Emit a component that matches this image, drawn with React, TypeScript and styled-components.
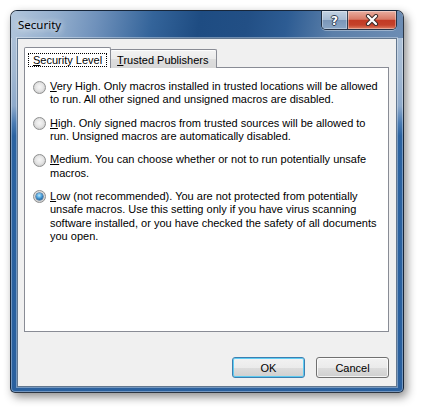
import React from "react";
import styled, { createGlobalStyle, css } from "styled-components";

const GlobalStyle = createGlobalStyle`
  html, body { margin: 0; padding: 0; background: #ffffff; }
  body { width: 422px; height: 412px; overflow: hidden; }
  * { box-sizing: border-box; }
`;

const Page = styled.div`
  width: 422px;
  height: 412px;
  padding: 10px 0 0 10px;
  background: #ffffff;
`;

const Window = styled.div`
  width: 394px;
  height: 383px;
  display: flex;
  flex-direction: column;
  border: 1px solid rgba(20, 28, 40, 0.85);
  border-radius: 7px 7px 5px 5px;
  overflow: hidden;
  background: linear-gradient(
    180deg,
    #b4c7dc 0px,
    #a3b9d2 60px,
    #8eaacb 95px,
    #4b7cb3 112px,
    #2b63a1 125px,
    #2a609e 100%
  );
  box-shadow: 3px 4px 10px rgba(0, 0, 0, 0.45),
    inset 0 0 0 1px rgba(255, 255, 255, 0.35);
`;

const TitleBar = styled.div`
  height: 27px;
  flex: none;
  display: flex;
  align-items: stretch;
  padding: 0 6px 0 7px;
  background: linear-gradient(
    100deg,
    #b2c6dc 0%,
    #93aecd 12%,
    #6f91bb 22%,
    #34649a 36%,
    #1e4c82 48%,
    #224f85 60%,
    #2d5c93 70%,
    #5b7fa9 82%,
    #6d8db4 100%
  );
`;

const Title = styled.div`
  display: flex;
  align-items: center;
  padding-bottom: 1px;
  font-family: "Noto Sans", "Liberation Sans", sans-serif;
  font-size: 11.5px;
  color: #000;
  text-shadow: 0 0 6px rgba(255, 255, 255, 0.9), 0 0 10px rgba(255, 255, 255, 0.6);
  flex: 1;
`;

const CaptionGroup = styled.div`
  align-self: flex-start;
  display: flex;
  height: 19px;
  border: 1px solid rgba(25, 35, 50, 0.85);
  border-top: none;
  border-radius: 0 0 5px 5px;
  overflow: hidden;
  box-shadow: 0 1px 0 rgba(255, 255, 255, 0.35);
`;

const CaptionButton = styled.div<{ $kind: "help" | "close" }>`
  height: 100%;
  display: flex;
  align-items: center;
  justify-content: center;
  box-shadow: inset 0 0 0 1px rgba(255, 255, 255, 0.35);
  ${(p) =>
    p.$kind === "help"
      ? css`
          width: 26px;
          border-right: 1px solid rgba(25, 35, 50, 0.8);
          background: linear-gradient(
            180deg,
            #c3d2e3 0%,
            #a6bbd3 48%,
            #7a96b9 52%,
            #8aa6c6 100%
          );
        `
      : css`
          width: 48px;
          background: linear-gradient(
            180deg,
            #e9aea0 0%,
            #d87a66 46%,
            #c23a24 52%,
            #c4412a 78%,
            #de7e62 100%
          );
        `}
`;

const HelpGlyph = styled.span`
  font-family: "DejaVu Sans", sans-serif;
  font-weight: bold;
  font-size: 12px;
  line-height: 12px;
  color: #ffffff;
  margin-top: 1px;
  text-shadow: 1px 0 0 #2c3c52, -1px 0 0 #2c3c52, 0 1px 0 #2c3c52,
    0 -1px 0 #2c3c52;
`;

const Frame = styled.div`
  flex: 1;
  display: flex;
  min-height: 0;
  padding: 0 6px 5px 6px;
`;

const Client = styled.div`
  flex: 1;
  min-width: 0;
  width: 380px;
  display: flex;
  flex-direction: column;
  background: #f0f0f0;
  border: 1px solid #62778f;
  box-shadow: 0 0 0 1px rgba(255, 255, 255, 0.35);
  padding: 8px 7px 8px 6px;
`;

const TabStrip = styled.div`
  display: flex;
  align-items: flex-end;
  height: 21px;
  margin-bottom: -1px;
  position: relative;
  z-index: 1;
  font-family: "Liberation Sans", Arial, sans-serif;
  font-size: 11px;
  color: #000;
`;

const Tab = styled.div<{ $active?: boolean }>`
  display: flex;
  border: 1px solid #898c95;
  border-bottom: none;
  border-radius: 2px 2px 0 0;
  ${(p) =>
    p.$active
      ? css`
          height: 21px;
          padding: 5px 3px 0 3px;
          background: #ffffff;
          position: relative;
          z-index: 2;
          margin-right: -1px;
        `
      : css`
          height: 19px;
          align-items: center;
          padding: 2px 8px 0 6px;
          background: linear-gradient(180deg, #f3f3f3 0%, #ebebeb 50%, #dedede 52%, #d8d8d8 100%);
          box-shadow: inset 0 1px 0 rgba(255, 255, 255, 0.8);
        `}
`;

const FocusLabel = styled.span`
  display: block;
  height: 14px;
  line-height: 12px;
  padding: 0 4px;
  border: 1px dotted #000;
`;

const Key = styled.span`
  text-decoration: underline;
  text-underline-offset: 1px;
`;

const Panel = styled.div`
  flex: 1;
  min-width: 0;
  background: #ffffff;
  border: 1px solid #898c95;
  padding: 12px 0 0 8px;
  display: flex;
  flex-direction: column;
  gap: 10px;
  font-family: "Liberation Sans", Arial, sans-serif;
  font-size: 11px;
  color: #000;
`;

const Option = styled.div`
  display: flex;
  align-items: flex-start;
  gap: 4px;
`;

const Radio = styled.span<{ $checked?: boolean }>`
  flex: none;
  width: 13px;
  height: 13px;
  margin-top: 0.5px;
  border-radius: 50%;
  border: 1px solid #8e8f8f;
  background: radial-gradient(
    circle at 50% 45%,
    #f6f6f6 0%,
    #e6e6e6 45%,
    #cfcfcf 75%,
    #f2f2f2 100%
  );
  display: flex;
  align-items: center;
  justify-content: center;
  &::after {
    content: "";
    display: ${(p) => (p.$checked ? "block" : "none")};
    width: 7px;
    height: 7px;
    border-radius: 50%;
    background: radial-gradient(
      circle at 45% 35%,
      #bfe8fb 0%,
      #5fb0e4 35%,
      #1f6cad 70%,
      #0d3f73 100%
    );
    box-shadow: 0 0 0 0.5px #1a4d7c;
  }
`;

const OptionText = styled.div`
  display: flex;
  flex-direction: column;
`;

const Line = styled.span`
  display: block;
  height: 13.33px;
  line-height: 13.33px;
  white-space: nowrap;
`;

const ButtonRow = styled.div`
  display: flex;
  justify-content: flex-end;
  gap: 11px;
  margin-top: 25px;
`;

const PushButton = styled.div<{ $default?: boolean }>`
  width: 73px;
  height: 21px;
  display: flex;
  align-items: center;
  justify-content: center;
  font-family: "Liberation Sans", Arial, sans-serif;
  font-size: 11px;
  color: #000;
  border-radius: 3px;
  border: 1px solid ${(p) => (p.$default ? "#3c7fb1" : "#707070")};
  background: linear-gradient(180deg, #f2f2f2 0%, #ebebeb 50%, #dddddd 51%, #cfcfcf 100%);
  box-shadow: inset 0 0 0 1px
    ${(p) => (p.$default ? "rgba(72, 200, 245, 0.85)" : "rgba(255, 255, 255, 0.75)")};
`;

type OptionData = { key: string; rest: string[]; checked?: boolean };

const options: OptionData[] = [
  {
    key: "V",
    rest: [
      "ery High. Only macros installed in trusted locations will be allowed",
      "to run. All other signed and unsigned macros are disabled.",
    ],
  },
  {
    key: "H",
    rest: [
      "igh. Only signed macros from trusted sources will be allowed to",
      "run. Unsigned macros are automatically disabled.",
    ],
  },
  {
    key: "M",
    rest: [
      "edium. You can choose whether or not to run potentially unsafe",
      "macros.",
    ],
  },
  {
    key: "L",
    checked: true,
    rest: [
      "ow (not recommended). You are not protected from potentially",
      "unsafe macros. Use this setting only if you have virus scanning",
      "software installed, or you have checked the safety of all documents",
      "you open.",
    ],
  },
];

const CloseIcon = () => (
  <svg width="14" height="12" viewBox="0 0 14 12">
    <path
      d="M3 2 L11 10 M11 2 L3 10"
      stroke="#3a2a28"
      strokeWidth="4.2"
      strokeLinecap="round"
      fill="none"
    />
    <path
      d="M3 2 L11 10 M11 2 L3 10"
      stroke="#ffffff"
      strokeWidth="2.3"
      strokeLinecap="round"
      fill="none"
    />
  </svg>
);

export default function App() {
  return (
    <>
      <GlobalStyle />
      <Page>
        <Window>
          <TitleBar>
            <Title>Security</Title>
            <CaptionGroup>
              <CaptionButton $kind="help">
                <HelpGlyph>?</HelpGlyph>
              </CaptionButton>
              <CaptionButton $kind="close">
                <CloseIcon />
              </CaptionButton>
            </CaptionGroup>
          </TitleBar>
          <Frame>
            <Client>
              <TabStrip>
                <Tab $active>
                  <FocusLabel>
                    <Key>S</Key>ecurity Level
                  </FocusLabel>
                </Tab>
                <Tab>
                  <span>
                    <Key>T</Key>rusted Publishers
                  </span>
                </Tab>
              </TabStrip>
              <Panel>
                {options.map((o) => (
                  <Option key={o.key}>
                    <Radio $checked={o.checked} />
                    <OptionText>
                      {o.rest.map((line, i) => (
                        <Line key={i}>
                          {i === 0 && <Key>{o.key}</Key>}
                          {line}
                        </Line>
                      ))}
                    </OptionText>
                  </Option>
                ))}
              </Panel>
              <ButtonRow>
                <PushButton $default>OK</PushButton>
                <PushButton>Cancel</PushButton>
              </ButtonRow>
            </Client>
          </Frame>
        </Window>
      </Page>
    </>
  );
}
